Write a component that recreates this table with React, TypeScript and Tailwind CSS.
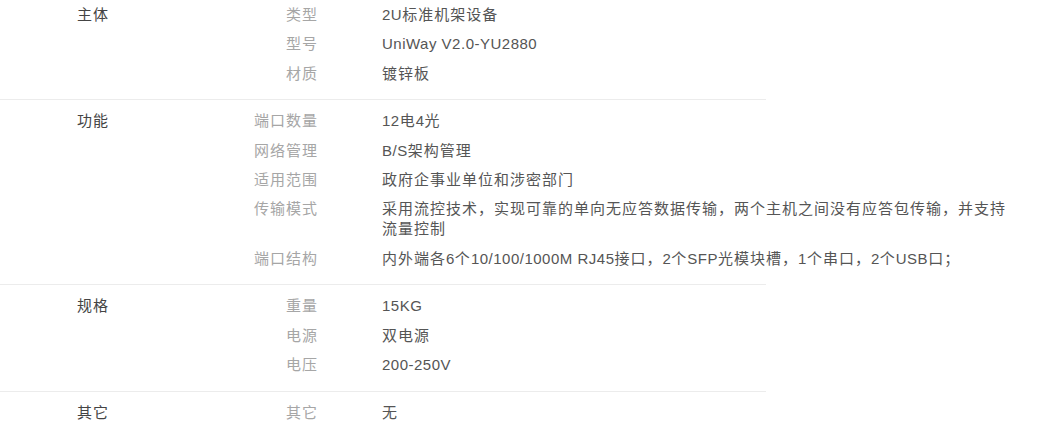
import React from 'react';

interface SpecRow {
  label: string;
  value: string;
}

interface SpecGroup {
  title: string;
  rows: SpecRow[];
}

const groups: SpecGroup[] = [
  {
    title: '主体',
    rows: [
      { label: '类型', value: '2U标准机架设备' },
      { label: '型号', value: 'UniWay V2.0-YU2880' },
      { label: '材质', value: '镀锌板' },
    ],
  },
  {
    title: '功能',
    rows: [
      { label: '端口数量', value: '12电4光' },
      { label: '网络管理', value: 'B/S架构管理' },
      { label: '适用范围', value: '政府企事业单位和涉密部门' },
      {
        label: '传输模式',
        value:
          '采用流控技术，实现可靠的单向无应答数据传输，两个主机之间没有应答包传输，并支持流量控制',
      },
      {
        label: '端口结构',
        value: '内外端各6个10/100/1000M RJ45接口，2个SFP光模块槽，1个串口，2个USB口；',
      },
    ],
  },
  {
    title: '规格',
    rows: [
      { label: '重量', value: '15KG' },
      { label: '电源', value: '双电源' },
      { label: '电压', value: '200-250V' },
    ],
  },
  {
    title: '其它',
    rows: [{ label: '其它', value: '无' }],
  },
];

// CJK glyphs get a bit more tracking than latin runs, like the original page
const CJK = /[\u3000-\u9fff\uff00-\uffef]+/g;

const Mixed: React.FC<{ text: string }> = ({ text }) => {
  const parts: React.ReactNode[] = [];
  let last = 0;
  let m: RegExpExecArray | null;
  CJK.lastIndex = 0;
  while ((m = CJK.exec(text))) {
    if (m.index > last) {
      parts.push(
        <span key={last} className="tracking-[0.5px]">
          {text.slice(last, m.index)}
        </span>
      );
    }
    parts.push(
      <span key={m.index} className="tracking-[1px]">
        {m[0]}
      </span>
    );
    last = m.index + m[0].length;
  }
  if (last < text.length) {
    parts.push(
      <span key={last} className="tracking-[0.5px]">
        {text.slice(last)}
      </span>
    );
  }
  return <>{parts}</>;
};

const SpecSection: React.FC<{ group: SpecGroup; first: boolean; last: boolean }> = ({
  group,
  first,
  last,
}) => (
  <div
    className={`flex w-[766px] ${first ? 'pt-0' : 'pt-[6px]'} ${
      last ? 'pb-[12px]' : 'pb-[11.5px] border-b border-[#ececec]'
    }`}
  >
    <div className="w-[230px] shrink-0 pl-[77px] pt-[5px] leading-5 tracking-[1px] text-[#444]">
      {group.title}
    </div>
    <div className="flex flex-col">
      {group.rows.map((row) => (
        <div key={row.label} className="flex pt-[5px] pb-[4.3px] leading-5">
          <div className="w-[88px] shrink-0 text-right tracking-[1px] text-[#a6a6a6]">{row.label}</div>
          <div className="ml-[64px] w-[630px] shrink-0 text-[#555]">
            <Mixed text={row.value} />
          </div>
        </div>
      ))}
    </div>
  </div>
);

export default function App() {
  return (
    <div
      className="min-h-[430px] bg-white text-[15px]"
      style={{ fontFamily: '"Liberation Sans", "Noto Sans CJK SC", sans-serif' }}
    >
      {groups.map((g, i) => (
        <SpecSection key={g.title} group={g} first={i === 0} last={i === groups.length - 1} />
      ))}
    </div>
  );
}
